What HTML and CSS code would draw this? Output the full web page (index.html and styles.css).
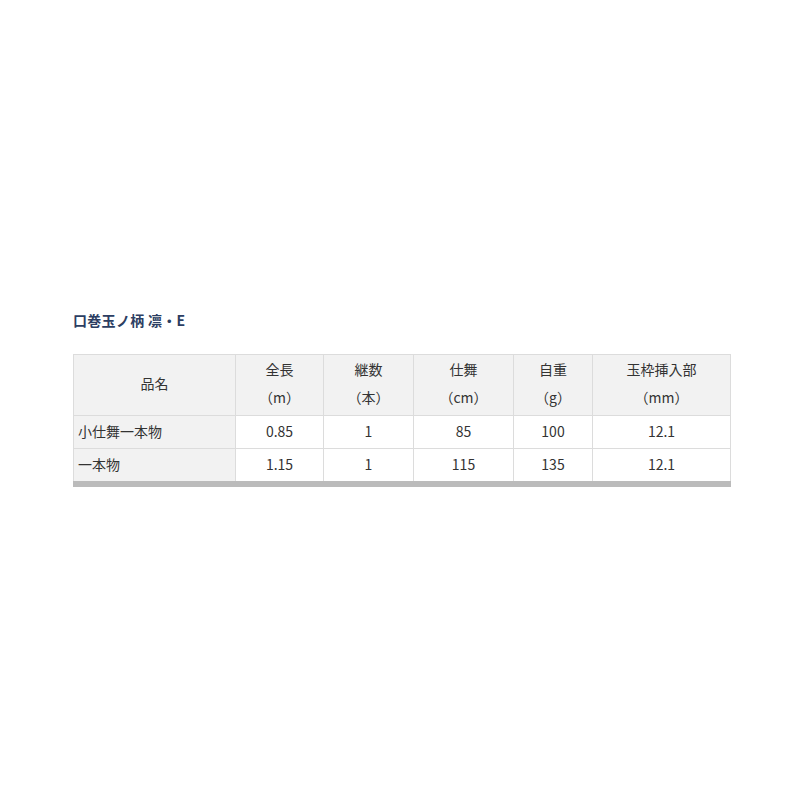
FILE: index.html
```html
<!DOCTYPE html>
<html lang="ja">
<head>
<meta charset="utf-8">
<link rel="stylesheet" href="styles.css">
</head>
<body>
<div class="wrap">
  <h2 class="title">口巻玉ノ柄 凛・E</h2>
  <table class="spec">
    <colgroup>
      <col class="c1"><col class="c2"><col class="c3"><col class="c4"><col class="c5"><col class="c6">
    </colgroup>
    <thead>
      <tr>
        <th>品名</th>
        <th>全長<br>（m）</th>
        <th>継数<br>（本）</th>
        <th>仕舞<br>（cm）</th>
        <th>自重<br>（g）</th>
        <th>玉枠挿入部<br>（mm）</th>
      </tr>
    </thead>
    <tbody>
      <tr>
        <td class="name">小仕舞一本物</td>
        <td>0.85</td><td>1</td><td>85</td><td>100</td><td>12.1</td>
      </tr>
      <tr>
        <td class="name">一本物</td>
        <td>1.15</td><td>1</td><td>115</td><td>135</td><td>12.1</td>
      </tr>
    </tbody>
  </table>
</div>
</body>
</html>
```
FILE: styles.css
```css
html, body {
  margin: 0;
  padding: 0;
  background: #fff;
}
body {
  font-family: "Noto Sans CJK JP", "Noto Sans", sans-serif;
  color: #333;
  font-size: 14px;
}
.wrap {
  padding: 310px 70px 0 73px;
}
.title {
  margin: 0 0 24px 0;
  font-size: 14px;
  line-height: 20px;
  font-weight: bold;
  color: #2c3e62;
  letter-spacing: 0.3px;
}
.spec {
  width: 657px;
  table-layout: fixed;
  border-collapse: collapse;
  border-bottom: 6px solid #bbb;
}
.c1 { width: 162px; }
.c2 { width: 88px; }
.c3 { width: 90px; }
.c4 { width: 100px; }
.c5 { width: 79px; }
.c6 { width: 138px; }
.spec th, .spec td {
  border: 1px solid #dcdcdc;
  padding: 1px 4px 3px;
  line-height: 28px;
  font-weight: normal;
  text-align: center;
  color: #333;
}
.spec th {
  background: #f2f2f2;
  padding: 0 4px 4px;
}
.spec td.name {
  background: #f2f2f2;
  text-align: left;
}
```
